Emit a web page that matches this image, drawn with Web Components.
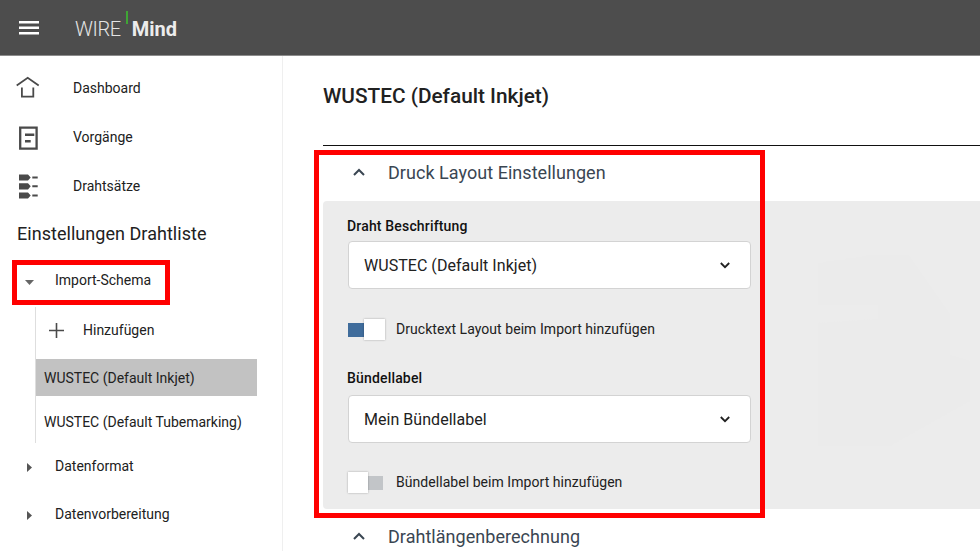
<!DOCTYPE html>
<html lang="de">
<head>
<meta charset="utf-8">
<title>WIRE Mind</title>
<style>
  html, body { margin: 0; height: 100%; overflow: hidden; background: #fff; }
  body { font-family: Roboto, "Liberation Sans", sans-serif; color: #212121; }
  wm-app { height: 551px; }
</style>
</head>
<body>
<wm-app>
  <wm-header slot="header"></wm-header>

  <wm-sidebar slot="sidebar">
    <wm-nav-item icon="home">Dashboard</wm-nav-item>
    <wm-nav-item icon="doc">Vorgänge</wm-nav-item>
    <wm-nav-item icon="sets">Drahtsätze</wm-nav-item>
    <wm-sidebar-title>Einstellungen Drahtliste</wm-sidebar-title>
    <wm-tree-node label="Import-Schema" open marked>
      <wm-tree-add>Hinzufügen</wm-tree-add>
      <wm-tree-leaf selected>WUSTEC (Default Inkjet)</wm-tree-leaf>
      <wm-tree-leaf>WUSTEC (Default Tubemarking)</wm-tree-leaf>
    </wm-tree-node>
    <wm-tree-node label="Datenformat"></wm-tree-node>
    <wm-tree-node label="Datenvorbereitung"></wm-tree-node>
  </wm-sidebar>

  <wm-main slot="main" heading="WUSTEC (Default Inkjet)">
    <wm-accordion heading="Druck Layout Einstellungen" open>
      <wm-field label="Draht Beschriftung" value="WUSTEC (Default Inkjet)"></wm-field>
      <wm-toggle on>Drucktext Layout beim Import hinzufügen</wm-toggle>
      <wm-field class="second" label="Bündellabel" value="Mein Bündellabel"></wm-field>
      <wm-toggle>Bündellabel beim Import hinzufügen</wm-toggle>
    </wm-accordion>
    <wm-accordion heading="Drahtlängenberechnung"></wm-accordion>
  </wm-main>
</wm-app>

<script>
(function () {
  function define(name, html) {
    class El extends HTMLElement {
      constructor() {
        super();
        this.attachShadow({ mode: "open" }).innerHTML = typeof html === "function" ? html(this) : html;
      }
      connectedCallback() {
        if (typeof html === "function") this.shadowRoot.innerHTML = html(this);
      }
    }
    customElements.define(name, El);
  }

  define("wm-app", `
    <style>
      :host { display: grid; grid-template-columns: 283px 1fr; grid-template-rows: 56px 1fr; overflow: hidden; }
      ::slotted([slot=header]) { grid-column: 1 / 3; }
    </style>
    <slot name="header"></slot>
    <slot name="sidebar"></slot>
    <slot name="main"></slot>
  `);

  define("wm-header", `
    <style>
      :host { display: flex; align-items: center; background: #4d4d4d; border-bottom: 1px solid #8c8c8c; box-sizing: border-box; height: 56px; }
      svg { display: block; margin-left: 19px; }
      .logo { display: flex; align-items: flex-start; margin-left: 36px; position: relative; height: 24px; }
      .wire { font: 300 20px/24px Roboto, sans-serif; color: #e4e4e4; letter-spacing: -0.4px; margin-top: 1px; }
      .bar { width: 2px; height: 13px; background: #3fa535; margin: -5px 4px 0 5px; }
      .mind { font: 700 20px/24px Roboto, sans-serif; color: #ececec; margin-top: 1px; }
    </style>
    <svg width="20" height="14" viewBox="0 0 20 14"><path fill="#fff" d="M0 0h20v2.6H0zM0 5.5h20v2.6H0zM0 11h20v2.6H0z"/></svg>
    <div class="logo"><span class="wire">WIRE</span><span class="bar"></span><span class="mind">Mind</span></div>
  `);

  define("wm-sidebar", `
    <style>
      :host { display: flex; flex-direction: column; padding-top: 7px; border-right: 1px solid #efefef; box-sizing: border-box; min-height: 495px; }
    </style>
    <slot></slot>
  `);

  const ICONS = {
    home: `<svg width="24" height="24" viewBox="0 0 24 24"><path fill="none" stroke="#4a4a4a" stroke-width="1.8" d="M.7 9.5 11.7 1.8l11 7.7M5.9 11.5v9.2h11.4v-9.2"/></svg>`,
    doc: `<svg width="24" height="26" viewBox="0 0 24 26"><path fill="none" stroke="#4a4a4a" stroke-width="2.3" d="M4.2 2.6h16.4v21.1H4.2z"/><path fill="#4a4a4a" d="M9 8.4h9.3v2.6H9zM9 14.9h5.7v2.6H9z"/></svg>`,
    sets: `<svg width="24" height="25" viewBox="0 0 24 25"><path fill="#4a4a4a" d="M3 .5h9l2.7 3-2.7 3H3zM16.3 2.5h5.4v2h-5.4zM3 9.2h9l2.7 3-2.7 3.2H3zM16.3 11.3h5.4v2h-5.4zM3 18.5h9l2.7 3-2.7 3H3zM16.3 20.5h5.4v2h-5.4z"/></svg>`
  };

  define("wm-nav-item", function (el) {
    return `
    <style>
      :host { display: flex; align-items: center; height: 49px; font-size: 14px; color: #212121; }
      .i { width: 24px; height: 24px; margin-left: 16px; margin-right: 33px; }
      svg { display: block; overflow: visible; }
    </style>
    <span class="i">${ICONS[el.getAttribute("icon")] || ""}</span><slot></slot>`;
  });

  define("wm-sidebar-title", `
    <style>
      :host { display: block; font-size: 18px; line-height: 24px; padding-top: 12px; padding-left: 17px; height: 34px; color: #212121; letter-spacing: .04px; }
    </style>
    <slot></slot>
  `);

  define("wm-tree-node", function (el) {
    const open = el.hasAttribute("open");
    const arrow = open
      ? `<svg width="9" height="5" viewBox="0 0 9 5" style="margin-top:4px"><path fill="#666" d="M0 0h9L4.5 5z"/></svg>`
      : `<svg width="5" height="9" viewBox="0 0 5 9" style="margin-top:3px"><path fill="#555" d="M0 0l5 4.5L0 9z"/></svg>`;
    return `
    <style>
      :host { display: block; position: relative; }
      .row { display: flex; align-items: center; height: 48px; font-size: 14px; color: #212121; }
      .a { width: 12px; margin-left: ${open ? 25 : 27}px; margin-right: ${open ? 18 : 16}px; display: flex; }
      .kids { margin: 3px 0 -1px 35px; padding-bottom: 3px; border-left: 1px solid #dedede; width: 221px; }
      .mark { position: absolute; left: 12px; top: 4px; width: 158px; height: 45px; box-sizing: border-box; border: 5.5px solid #f00; pointer-events: none; }
    </style>
    <div class="row"><span class="a">${arrow}</span><span>${el.getAttribute("label")}</span></div>
    ${open ? `<div class="kids"><slot></slot></div>` : ""}
    ${el.hasAttribute("marked") ? `<div class="mark"></div>` : ""}`;
  });

  define("wm-tree-add", `
    <style>
      :host { display: flex; align-items: center; height: 46px; margin-bottom: 6px; font-size: 14px; color: #212121; }
      svg { display: block; margin: 0 19px 0 13px; }
    </style>
    <svg width="15" height="15" viewBox="0 0 15 15"><path fill="#4a4a4a" d="M6.7 0h1.6v6.7H15v1.6H8.3V15H6.7V8.3H0V6.7h6.7z"/></svg><slot></slot>
  `);

  define("wm-tree-leaf", function (el) {
    return `
    <style>
      :host { display: flex; align-items: center; height: 37px; padding-left: 8px; font-size: 14px; color: #212121; white-space: nowrap; ${el.hasAttribute("selected") ? "background: #c2c2c2; margin-bottom: 7px;" : ""} }
    </style>
    <slot></slot>`;
  });

  define("wm-main", function (el) {
    return `
    <style>
      :host { display: block; position: relative; padding-left: 40px; overflow: hidden; }
      h1 { margin: 0; font: 500 20.8px/24px Roboto, sans-serif; color: #212121; padding-top: 28px; height: 61px; box-sizing: content-box; border-bottom: 1px solid #111; }
      .mark { position: absolute; left: 31px; top: 94px; width: 451px; height: 368px; box-sizing: border-box; border: 5.5px solid #f00; pointer-events: none; }
    </style>
    <h1>${el.getAttribute("heading")}</h1>
    <slot></slot>
    <div class="mark"></div>`;
  });

  define("wm-accordion", function (el) {
    const open = el.hasAttribute("open");
    return `
    <style>
      :host { display: block; }
      .head { display: flex; align-items: center; height: ${open ? 52 : 54}px; margin-bottom: ${open ? 3 : 0}px; font-size: 18px; color: #3a4652; letter-spacing: .04px; }
      svg { display: block; margin: 0 23px 0 30px; }
      .body { position: relative; background: #ececec; border-radius: 4px 0 0 4px; padding: 16px 0 17px 25px; }
      .body svg.wm { position: absolute; right: 10px; top: 52px; margin: 0; }
    </style>
    <div class="head"><svg width="12" height="8" viewBox="0 0 12 8"><path fill="none" stroke="#3a4652" stroke-width="2" d="M1 7l5-5 5 5"/></svg><span>${el.getAttribute("heading")}</span></div>
    ${open ? `<div class="body">
      <svg class="wm" width="152" height="195" viewBox="0 0 152 195"><path fill="#ebebeb" d="M0 10l55-8h35l42 60v40l20 6v40l-80 45H0V70l60-4V52H0z"/></svg>
      <slot></slot></div>` : ""}`;
  });

  define("wm-field", function (el) {
    const second = el.classList.contains("second");
    return `
    <style>
      :host { display: block; position: relative; margin-bottom: ${second ? 29 : 30}px; }
      label { display: block; font: 500 14px/18px Roboto, sans-serif; letter-spacing: .17px; color: #111; margin: 0 0 ${second ? 8 : 6}px -1px; }
      .box { display: flex; align-items: center; justify-content: space-between; box-sizing: border-box; width: 403px; height: 48px; padding: 0 20px 0 15px; background: #fff; border: 1px solid #d3d3d3; border-radius: 4px; font-size: 16px; color: #212121; letter-spacing: .04px; }
      svg { display: block; }
    </style>
    <label>${el.getAttribute("label")}</label>
    <div class="box"><span>${el.getAttribute("value")}</span><svg width="10" height="7" viewBox="0 0 10 7"><path fill="none" stroke="#212121" stroke-width="1.8" d="M.8 1l4.2 4.2L9.2 1"/></svg></div>`;
  });

  define("wm-toggle", function (el) {
    const on = el.hasAttribute("on");
    return `
    <style>
      :host { display: flex; align-items: center; position: relative; height: 20px; font-size: 14px; color: #212121; margin-bottom: 30px; letter-spacing: .05px; }
      :host(:last-of-type) { margin-bottom: 0; }
      .sw { position: relative; width: 37px; height: 20px; margin-right: 11px; }
      .track { position: absolute; left: 0; right: ${on ? 0 : 2}px; top: 4px; height: 14px; background: ${on ? "#3f6c9b" : "#c2c5c8"}; }
      .thumb { position: absolute; ${on ? "right: 0" : "left: 0"}; top: 0; width: ${on ? 21 : 20}px; height: 21px; background: #fff; box-shadow: 0 0 2px rgba(0,0,0,.3); }
    </style>
    <span class="sw"><span class="track"></span><span class="thumb"></span></span><slot></slot>`;
  });
})();
</script>
</body>
</html>
